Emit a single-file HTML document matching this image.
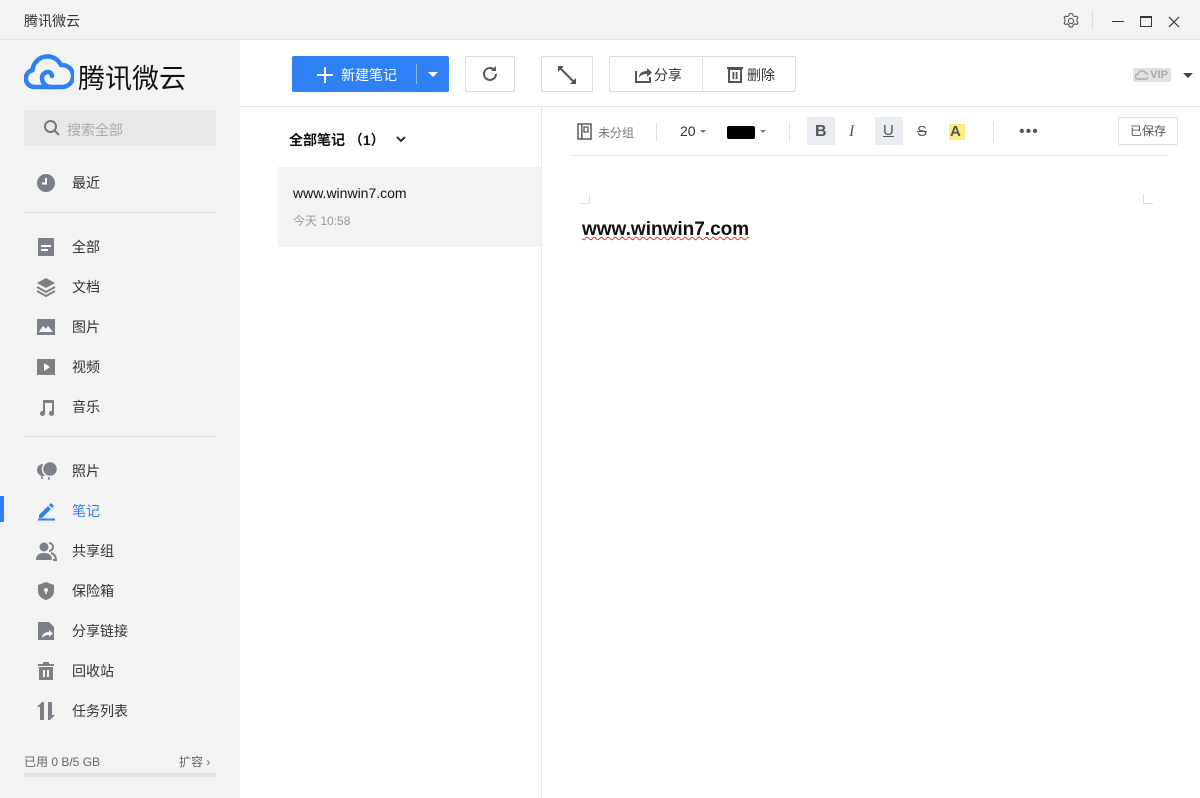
<!DOCTYPE html>
<html><head><meta charset="utf-8"><style>
*{margin:0;padding:0;box-sizing:border-box}
body{width:1200px;height:798px;overflow:hidden;background:#fff;font-family:"Liberation Sans","Noto Sans CJK SC",sans-serif;position:relative;color:#333}
.abs{position:absolute}
.side{left:0;top:0;width:240px;height:798px;background:#f3f3f3}
.title{left:0;top:0;width:1200px;height:40px;background:#f3f3f3;border-bottom:1px solid #e2e2e2}
.nav{left:0;width:240px;height:40px;font-size:14px;color:#333}
.nav span{position:absolute;left:72px;top:11px}
.nav svg{position:absolute;left:36px;top:11px}
.hr{left:24px;width:192px;height:1px;background:#e0e0e0}
.btn{border:1px solid #dcdcdc;border-radius:2px;background:#fff;height:36px;top:56px}
.tb{font-size:13px;color:#555}
</style></head><body>
<div class="abs side"></div>
<div class="abs title"></div>
<div class="abs" style="left:24px;top:11px;font-size:14px;color:#333">腾讯微云</div>
<svg class="abs" style="left:1062px;top:12px" width="18" height="18" viewBox="0 0 18 18"><path d="M9 1.5l1.6.3.5 1.9 1.7 1 1.9-.6 1.2 1.4-.9 1.8v2l.9 1.8-1.2 1.4-1.9-.6-1.7 1-.5 1.9-1.6.3-1.6-.3-.5-1.9-1.7-1-1.9.6-1.2-1.4.9-1.8v-2l-.9-1.8 1.2-1.4 1.9.6 1.7-1 .5-1.9z" fill="none" stroke="#555" stroke-width="1.1"/><circle cx="9" cy="9" r="2.6" fill="none" stroke="#555" stroke-width="1.1"/></svg>
<div class="abs" style="left:1092px;top:10px;width:1px;height:20px;background:#ddd"></div>
<div class="abs" style="left:1112px;top:21px;width:12px;height:1px;background:#333"></div>
<div class="abs" style="left:1140px;top:16px;width:12px;height:11px;border:1px solid #333;border-top-width:2px"></div>
<svg class="abs" style="left:1168px;top:16px" width="12" height="12"><path d="M1 1L11 11M11 1L1 11" stroke="#333" stroke-width="1.2"/></svg>
<svg class="abs" style="left:24px;top:54px" width="50" height="36" viewBox="0 0 50 36"><path d="M10 33a8.5 8.5 0 0 1-1.5-16.8A15 15 0 0 1 37 11a11 11 0 0 1 2 22z" fill="none" stroke="#2f80f7" stroke-width="4.5" stroke-linejoin="round"/><path d="M27 33a9 9 0 0 1-9-9a6 6 0 0 1 6-6a4 4 0 0 1 4 4" fill="none" stroke="#2f80f7" stroke-width="4.5" stroke-linecap="round"/></svg>
<div class="abs" style="left:78px;top:57px;font-size:27px;color:#111">腾讯微云</div>
<div class="abs" style="left:24px;top:110px;width:192px;height:36px;background:#e8e8e8;border-radius:2px"></div>
<svg class="abs" style="left:43px;top:119px" width="18" height="18"><circle cx="7.5" cy="7.5" r="5.5" fill="none" stroke="#777" stroke-width="2"/><path d="M11.5 11.5L16 16" stroke="#777" stroke-width="2"/></svg>
<div class="abs" style="left:67px;top:120px;font-size:14px;color:#aaa">搜索全部</div>
<div class="abs nav" style="top:162px"><svg width="20" height="20"><circle cx="10" cy="10" r="9" fill="#7a8086"/><path d="M10 5v5.5H6" stroke="#fff" stroke-width="2" fill="none"/></svg><span>最近</span></div>
<div class="abs hr" style="top:212px"></div>
<div class="abs nav" style="top:226px"><svg width="20" height="20"><rect x="2" y="1" width="16" height="18" fill="#7a8086"/><rect x="5" y="8" width="10" height="2" fill="#fff"/><rect x="5" y="12" width="7" height="2" fill="#fff"/></svg><span>全部</span></div>
<div class="abs nav" style="top:266px"><svg width="20" height="20"><path d="M10 1l9 5-9 5-9-5z" fill="#7a8086"/><path d="M1 10l9 5 9-5M1 14l9 5 9-5" stroke="#7a8086" stroke-width="2" fill="none"/></svg><span>文档</span></div>
<div class="abs nav" style="top:306px"><svg width="20" height="20"><rect x="1" y="2" width="18" height="16" fill="#7a8086"/><path d="M3 15l4-6 3 3 2-3 5 6z" fill="#fff"/></svg><span>图片</span></div>
<div class="abs nav" style="top:346px"><svg width="20" height="20"><rect x="1" y="2" width="18" height="16" fill="#7a8086"/><path d="M8 6l6 4-6 4z" fill="#fff"/></svg><span>视频</span></div>
<div class="abs nav" style="top:386px"><svg width="20" height="20"><path d="M7 3h11v13.5a2.5 2.5 0 1 1-2.5-2.5H16V6H9v10.5a2.5 2.5 0 1 1-2.5-2.5H7z" fill="#7a8086"/></svg><span>音乐</span></div>
<div class="abs hr" style="top:436px"></div>
<div class="abs nav" style="top:450px"><svg width="22" height="20"><circle cx="7" cy="9" r="6" fill="#7a8086"/><circle cx="14" cy="8" r="7.5" fill="#7a8086" stroke="#f3f3f3" stroke-width="1.5"/><path d="M13 16v3M6 15v3" stroke="#7a8086" stroke-width="1.5"/></svg><span>照片</span></div>
<div class="abs" style="left:0;top:496px;width:4px;height:26px;background:#2f80f7"></div>
<div class="abs nav" style="top:490px;color:#2f80f7"><svg width="20" height="20"><path d="M3 14l9-9 3 3-9 9H3z" fill="#2f80f7"/><path d="M13 4l2-2 3 3-2 2z" fill="#2f80f7"/><rect x="2" y="17.5" width="17" height="2" fill="#2f80f7"/></svg><span>笔记</span></div>
<div class="abs nav" style="top:530px"><svg width="22" height="20"><circle cx="8" cy="6" r="4.5" fill="#7a8086"/><path d="M0 19c0-5 3-7 8-7s8 2 8 7z" fill="#7a8086"/><path d="M13 2a4 4 0 0 1 0 8M15 12c3 1 5 3 5 7h-3" stroke="#7a8086" stroke-width="2" fill="none"/></svg><span>共享组</span></div>
<div class="abs nav" style="top:570px"><svg width="20" height="20"><path d="M10 1l8 3v6c0 5-4 8-8 9-4-1-8-4-8-9V4z" fill="#7a8086"/><circle cx="10" cy="9" r="2" fill="#f3f3f3"/><rect x="9.2" y="9" width="1.6" height="4" fill="#f3f3f3"/></svg><span>保险箱</span></div>
<div class="abs nav" style="top:610px"><svg width="20" height="20"><path d="M2 1h11l5 5v13H2z" fill="#7a8086"/><path d="M6 17c0-4 3-6 7-6V9l4 3.5-4 3.5v-2c-3 0-5 1-7 3z" fill="#f3f3f3"/></svg><span>分享链接</span></div>
<div class="abs nav" style="top:650px"><svg width="20" height="20"><rect x="2" y="3" width="16" height="2" fill="#7a8086"/><rect x="7" y="1" width="6" height="2" fill="#7a8086"/><rect x="3" y="6" width="14" height="13" fill="#7a8086"/><rect x="7" y="9" width="2" height="7" fill="#f3f3f3"/><rect x="11" y="9" width="2" height="7" fill="#f3f3f3"/></svg><span>回收站</span></div>
<div class="abs nav" style="top:690px"><svg width="20" height="20"><path d="M6 1L1 6h3v13h4V1zM14 19l5-5h-3V1h-4v18z" fill="#7a8086"/></svg><span>任务列表</span></div>
<div class="abs" style="left:24px;top:753px;font-size:12px;color:#666">已用 0 B/5 GB</div>
<div class="abs" style="left:179px;top:753px;font-size:12px;color:#666">扩容 ›</div>
<div class="abs" style="left:24px;top:773px;width:192px;height:4px;background:#e2e2e2"></div>
<div class="abs" style="left:292px;top:56px;width:157px;height:36px;background:#2f80f7;border-radius:2px"></div>
<svg class="abs" style="left:316px;top:66px" width="18" height="18"><path d="M9 1v16M1 9h16" stroke="#fff" stroke-width="2"/></svg>
<div class="abs" style="left:341px;top:65px;font-size:14px;color:#fff">新建笔记</div>
<div class="abs" style="left:416px;top:64px;width:1px;height:20px;background:#8fb8fb"></div>
<div class="abs" style="left:428px;top:72px;border:5px solid transparent;border-top-color:#fff"></div>
<div class="abs btn" style="left:465px;width:50px"></div>
<svg class="abs" style="left:480px;top:64px" width="20" height="20"><path d="M16 10a6 6 0 1 1-2-4.5" stroke="#555" stroke-width="2" fill="none"/><path d="M16 2v5h-5z" fill="#555"/></svg>
<div class="abs btn" style="left:541px;width:52px"></div>
<svg class="abs" style="left:557px;top:65px" width="20" height="20"><path d="M2 2l16 16" stroke="#555" stroke-width="2"/><path d="M1 1h6L1 7zM19 19h-6l6-6z" fill="#555"/></svg>
<div class="abs btn" style="left:609px;width:187px"></div>
<div class="abs" style="left:702px;top:57px;width:1px;height:34px;background:#dcdcdc"></div>
<svg class="abs" style="left:634px;top:65px" width="18" height="18"><path d="M2 6v11h14v-5" stroke="#555" stroke-width="2" fill="none"/><path d="M5 13c0-5 3-7 8-7V3l5 4.5-5 4.5V9c-4 0-6 1-8 4z" fill="#555"/></svg>
<div class="abs tb" style="left:654px;top:65px;font-size:14px;color:#333">分享</div>
<svg class="abs" style="left:726px;top:65px" width="18" height="18"><rect x="1" y="2" width="16" height="2" fill="#555"/><rect x="3" y="4" width="12" height="13" fill="none" stroke="#555" stroke-width="2"/><rect x="6.5" y="7" width="1.8" height="7" fill="#555"/><rect x="9.7" y="7" width="1.8" height="7" fill="#555"/></svg>
<div class="abs tb" style="left:747px;top:65px;font-size:14px;color:#333">删除</div>
<div class="abs" style="left:1133px;top:68px;width:38px;height:14px;background:#e2e2e2;border-radius:2px;font-size:11px;font-weight:bold;color:#aaa;text-align:right;padding-right:3px;line-height:14px">VIP</div>
<svg class="abs" style="left:1135px;top:69px" width="13" height="12"><path d="M3 10a2.5 2.5 0 0 1 0-5 4 4 0 0 1 7.5-1 3 3 0 0 1 0 6z" fill="none" stroke="#aaa" stroke-width="1.4"/></svg>
<div class="abs" style="left:1183px;top:73px;border:5px solid transparent;border-top-color:#444"></div>
<div class="abs" style="left:240px;top:106px;width:960px;height:1px;background:#e2e2e2"></div>
<div class="abs" style="left:541px;top:106px;width:1px;height:692px;background:#e8e8e8"></div>
<div class="abs" style="left:289px;top:130px;font-size:14px;font-weight:bold;color:#111">全部笔记 （1）</div>
<svg class="abs" style="left:395px;top:134px" width="12" height="10"><path d="M2 3l4 4 4-4" stroke="#333" stroke-width="2" fill="none"/></svg>
<div class="abs" style="left:277px;top:167px;width:264px;height:80px;background:#f3f3f3"></div>
<div class="abs" style="left:293px;top:185px;font-size:14px;color:#111">www.winwin7.com</div>
<div class="abs" style="left:293px;top:212px;font-size:12px;color:#999">今天 10:58</div>
<svg class="abs" style="left:577px;top:123px" width="16" height="17"><rect x="1" y="1" width="13" height="15" fill="none" stroke="#666" stroke-width="1.6"/><rect x="4" y="1" width="1.6" height="15" fill="#666"/><rect x="7" y="4" width="4" height="5" fill="none" stroke="#666" stroke-width="1.4"/></svg>
<div class="abs" style="left:598px;top:124px;font-size:12px;color:#777">未分组</div>
<div class="abs" style="left:656px;top:122px;width:1px;height:20px;background:#e2e2e2"></div>
<div class="abs" style="left:680px;top:123px;font-size:14px;color:#333">20</div>
<div class="abs" style="left:700px;top:130px;border:3.5px solid transparent;border-top-color:#777"></div>
<div class="abs" style="left:727px;top:126px;width:28px;height:13px;background:#000;border-radius:2px"></div>
<div class="abs" style="left:760px;top:130px;border:3.5px solid transparent;border-top-color:#777"></div>
<div class="abs" style="left:789px;top:122px;width:1px;height:20px;background:#e2e2e2"></div>
<div class="abs" style="left:807px;top:117px;width:28px;height:28px;background:#e9edf1"></div>
<div class="abs" style="left:815px;top:123px;font-size:16px;font-weight:bold;color:#555">B</div>
<div class="abs" style="left:849px;top:123px;font-size:16px;font-style:italic;color:#555;font-family:'Liberation Serif',serif">I</div>
<div class="abs" style="left:875px;top:117px;width:28px;height:28px;background:#e9edf1"></div>
<div class="abs" style="left:883px;top:122px;font-size:15px;color:#555;text-decoration:underline">U</div>
<div class="abs" style="left:917px;top:123px;font-size:15px;color:#555;text-decoration:line-through">S</div>
<div class="abs" style="left:949px;top:124px;width:16px;height:16px;background:#fdeb7d"></div>
<div class="abs" style="left:950px;top:123px;font-size:15px;font-weight:bold;color:#555">A</div>
<div class="abs" style="left:993px;top:122px;width:1px;height:20px;background:#e2e2e2"></div>
<div class="abs" style="left:1019px;top:123px;font-size:16px;color:#555;letter-spacing:1px">•••</div>
<div class="abs" style="left:1118px;top:117px;width:60px;height:28px;border:1px solid #ddd;border-radius:2px;font-size:12px;color:#555;text-align:center;line-height:26px">已保存</div>
<div class="abs" style="left:572px;top:155px;width:595px;height:1px;background:#e8e8e8"></div>
<div class="abs" style="left:580px;top:194px;width:10px;height:10px;border-right:1px solid #ddd;border-bottom:1px solid #ddd"></div>
<div class="abs" style="left:1143px;top:194px;width:10px;height:10px;border-left:1px solid #ddd;border-bottom:1px solid #ddd"></div>
<div class="abs" style="left:582px;top:219px;font-size:19px;font-weight:bold;color:#111;text-decoration:underline wavy #e33;text-decoration-thickness:1px">www.winwin7.com</div>
</body></html>
